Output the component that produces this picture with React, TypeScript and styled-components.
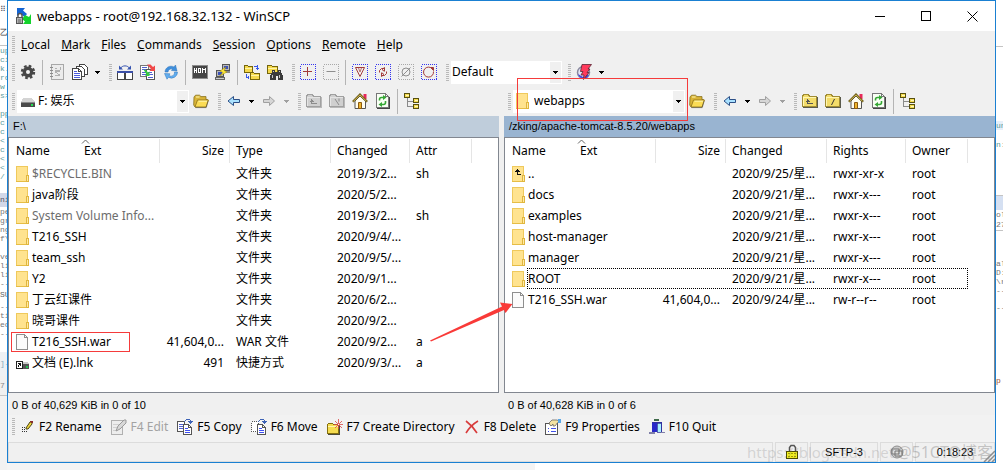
import React from "react";
import styled, { createGlobalStyle, css } from "styled-components";

const uiFont = '"Noto Sans", "Noto Sans CJK SC", sans-serif';
const narrowFont = '"Liberation Sans", "Noto Sans CJK SC", sans-serif';

const GlobalStyle = createGlobalStyle`
  * { box-sizing: border-box; }
  body { margin: 0; background: #ffffff; font: 12px/16px ${uiFont}; color: #000000; }
  button, select { font: inherit; color: inherit; }
`;

/* ---------- page and window ---------- */

const Desktop = styled.div`
  display: grid;
  grid-template-columns: 7px minmax(0, 1fr) 7px;
  min-height: 100vh;
  overflow: hidden;
  background: linear-gradient(90deg, #f4f4f4 0 535px, #ffffff 535px);
`;

const Sliver = styled.div`
  overflow: hidden;
  background: #ffffff;
`;

const CodeLine = styled.div<{ $h?: number; $color?: string; $bg?: string; $rule?: boolean }>`
  height: ${(p) => p.$h ?? 9}px;
  line-height: ${(p) => p.$h ?? 9}px;
  font-family: "Liberation Mono", monospace;
  font-size: 8px;
  white-space: nowrap;
  color: ${(p) => p.$color ?? "#5d9c9c"};
  background: ${(p) => p.$bg ?? "transparent"};
  border-bottom: ${(p) => (p.$rule ? "1px solid #c4c4c4" : "0")};
`;

const Window = styled.main`
  align-self: start;
  display: flex;
  flex-direction: column;
  border: 1px solid #1a80d2;
  background: #f0f0f0;
  position: relative;
`;

const TitleBar = styled.header`
  display: flex;
  align-items: center;
  height: 30px;
  padding-left: 8px;
  background: #ffffff;
`;

const Title = styled.h1`
  flex: 1;
  margin: 0 0 0 5px;
  font-size: 13px;
  font-weight: 400;
`;

const CaptionButton = styled.button`
  display: grid;
  place-items: center;
  width: 46px;
  height: 29px;
  padding: 0;
  border: 0;
  background: transparent;
`;

const Row = styled.div<{ $h: number }>`
  display: flex;
  align-items: center;
  height: ${(p) => p.$h}px;
`;

const Gripper = styled.span<{ $first?: boolean }>`
  flex: none;
  width: 3px;
  height: 17px;
  margin: 0 1px 0 ${(p) => (p.$first ? 4 : 6)}px;
  background: repeating-linear-gradient(#b9b9b9 0 1px, transparent 1px 2px);
`;

const MenuItem = styled.button`
  padding: 0 6px 0 5px;
  border: 0;
  background: transparent;
`;

const ToolButton = styled.button`
  flex: none;
  display: grid;
  place-items: center;
  width: 23px;
  height: 23px;
  padding: 0;
  border: 0;
  background: transparent;
`;

const DropButton = styled(ToolButton)`
  width: 12px;
`;

const Divider = styled.span`
  flex: none;
  width: 1px;
  height: 25px;
  margin: 0 2px 0 3px;
  background: #b4b4b4;
`;

const Combo = styled.label<{ $w: number }>`
  position: relative;
  flex: none;
  display: flex;
  align-items: center;
  width: ${(p) => p.$w}px;
  height: 23px;
  margin-left: 1px;
  padding-left: 1px;
  background: #ffffff;
`;

const ComboIcon = styled.span`
  display: flex;
  width: 18px;
  margin-left: 2px;
`;

const Select = styled.select`
  flex: 1;
  min-width: 0;
  height: 22px;
  padding: 0;
  border: 0;
  outline: 0;
  background: transparent;
  appearance: none;
`;

const ComboArrow = styled.span`
  display: grid;
  place-items: center;
  width: 11px;
  height: 21px;
  margin-right: 1px;
  background: #f0f0f0;
  pointer-events: none;
`;

/* ---------- file panels ---------- */

const Panels = styled.div`
  display: flex;
  gap: 5px;
`;

const Panel = styled.section`
  flex: 1;
  min-width: 0;
`;

const PathBar = styled.div<{ $active?: boolean }>`
  height: 21px;
  padding: 0 5px;
  font: 11px/21px ${narrowFont};
  background: ${(p) => (p.$active ? "#99b4d1" : "#bfcddb")};
`;

const ListBox = styled.div`
  min-height: 256px;
  border: 1px solid #828790;
  background: #ffffff;
`;

const FileTable = styled.table`
  width: 100%;
  table-layout: fixed;
  border-collapse: collapse;
`;

const HeadCell = styled.th<{ $w?: number; $right?: boolean }>`
  width: ${(p) => (p.$w ? `${p.$w}px` : "auto")};
  height: 25px;
  padding: 0 6px;
  &:first-child { padding-left: 7px; }
  font-weight: 400;
  text-align: ${(p) => (p.$right ? "right" : "left")};
  background: ${(p) => (p.$w ? "linear-gradient(#e5e5e5, #e5e5e5) right 0 top 1px / 1px 24px no-repeat" : "none")};
`;

const HeadName = styled.span`
  display: grid;
  grid-template-columns: 68px 1fr;
`;

const ExtLabel = styled.span`
  position: relative;
`;

const SortMark = styled.svg`
  position: absolute;
  left: -3px;
  top: -4px;
`;

const Cell = styled.td<{ $right?: boolean; $dim?: boolean }>`
  position: relative;
  height: 21px;
  padding: 0 2px 0 6px;
  &:first-child { padding-left: 7px; }
  white-space: nowrap;
  ${(p) => p.$right && css`padding-right: 6px; text-align: right;`}
  color: ${(p) => (p.$dim ? "#6d6d6d" : "#000000")};
`;

const NameBox = styled.span`
  display: flex;
  align-items: center;
  gap: 3px;
`;

const FocusFrame = styled.span`
  position: absolute;
  left: 22px;
  top: 0;
  width: 441px;
  height: 21px;
  border: 1px dotted #000000;
  pointer-events: none;
`;

const FileMark = styled.span`
  position: absolute;
  z-index: 2;
  left: 2px;
  top: 1px;
  width: 119px;
  height: 20px;
  border: 1px solid #f53b3b;
  pointer-events: none;
`;

const ComboMark = styled.span`
  position: absolute;
  z-index: 2;
  left: 4px;
  top: -12px;
  width: 171px;
  height: 43px;
  border: 1px solid #f53b3b;
  pointer-events: none;
`;

const ArrowMark = styled.svg`
  position: absolute;
  z-index: 3;
  left: 20px;
  top: -32px;
  pointer-events: none;
`;

const CountLine = styled.div`
  height: 22px;
  padding: 0 4px;
  font: 11px/24px ${narrowFont};
`;

/* ---------- bottom bars ---------- */

const KeyBar = styled.nav`
  display: flex;
  align-items: center;
  height: 27px;
  padding-bottom: 4px;
  background: #f2f2f2;
`;

const KeyButton = styled.button`
  display: flex;
  align-items: center;
  gap: 4px;
  padding: 0 6px 0 3px;
  border: 0;
  background: transparent;
  white-space: nowrap;
  &:disabled { color: #a3a3a3; }
`;

const StatusBar = styled.footer`
  position: relative;
  display: flex;
  gap: 2px;
  height: 20px;
  font: 11px/18px ${narrowFont};
`;

const StatusCell = styled.div<{ $w?: number }>`
  flex: ${(p) => (p.$w ? "none" : "1")};
  width: ${(p) => (p.$w ? `${p.$w}px` : "auto")};
  display: grid;
  place-items: center;
  border: 1px solid #dcdcdc;
`;

const Watermark = styled.div`
  position: absolute;
  right: 2px;
  bottom: 1px;
  display: flex;
  gap: 3px;
  font: 16px/18px ${uiFont};
  color: rgba(120, 120, 120, 0.38);
  white-space: nowrap;
  pointer-events: none;
`;

const WatermarkLink = styled.span`
  font-size: 15px;
  color: rgba(120, 120, 120, 0.25);
`;

const SizeGrip = styled.svg`
  position: absolute;
  right: 0;
  bottom: 0;
`;

/* ---------- icons ---------- */

type IconProps = { children: React.ReactNode; w?: number; h?: number; smooth?: boolean };
const Icon = ({ children, w = 16, h = 16, smooth }: IconProps) => (
  <svg width={w} height={h} viewBox={`0 0 ${w} ${h}`} fill="none" shapeRendering={smooth ? "auto" : "crispEdges"} aria-hidden="true">
    {children}
  </svg>
);

const Caret = ({ off }: { off?: boolean }) => (
  <Icon w={5} h={3}><path d="M0 0h5v1h-1v1h-1v1h-1v-1h-1v-1h-1z" fill={off ? "#a0a0a0" : "#000"} /></Icon>
);

const AppIcon = () => (
  <Icon smooth>
    <path d="M1 0h8L7 2.500l4 3.500-2.500 3L4 5.500 1 8z" fill="#1464d2" />
    <path d="M15 6v10H7l2-2.500L6 11l3-4 4 2z" fill="#14d22c" />
    <path d="M2 10V7.500a2 2 0 0 1 4 0V10" stroke="#555" strokeWidth="1.500" />
    <rect x="0.500" y="9.500" width="6" height="6" fill="#b5b5b5" stroke="#555" />
    <path d="M2 12h3M2 14h3" stroke="#666" />
  </Icon>
);

const Gear = () => (
  <Icon smooth>
    <circle cx="8" cy="8" r="5.400" fill="#474747" />
    <circle cx="8" cy="8" r="6" stroke="#474747" strokeWidth="2.400" strokeDasharray="2.600 2.110" />
    <circle cx="8" cy="8" r="2" fill="#f4f4f4" />
  </Icon>
);

const SyncBook = () => (
  <Icon>
    <rect x="2.500" y="0.500" width="12" height="15" fill="#ececec" stroke="#a8a8a8" />
    <path d="M1 3h3M1 6h3M1 9h3M1 12h3" stroke="#8c8c8c" />
    <path d="M6 4h2v2h3v2h-3v2h3v2h-5v-1h3v-2h-3v-3h2v-1h-2zM11 3h1v3h-1z" fill="#b0b0b0" />
  </Icon>
);

const Stack = () => (
  <Icon>
    <path d="M7.500 0.500h5l3 3v7h-8z" fill="#fff" stroke="#444" />
    <path d="M4.500 2.500h5l3 3v7h-8z" fill="#fff" stroke="#444" />
    <path d="M0.500 4.500h6l3 3v8h-9z" fill="#fff" stroke="#444" />
    <path d="M6.500 4.500v3h3" stroke="#444" />
    <path d="M2 7.500h3M2 9.500h6M2 11.500h6M2 13.500h6" stroke="#4b5bdc" />
  </Icon>
);

const SplitView = () => (
  <Icon>
    <rect x="0.500" y="7.500" width="7" height="8" fill="#fff" stroke="#444" />
    <rect x="8.500" y="7.500" width="7" height="8" fill="#fff" stroke="#444" />
    <path d="M0 7h16v2H0z" fill="#3c50a8" />
    <g shapeRendering="auto">
      <path d="M3.500 4.500C5 1 11 1 12.500 4.500" stroke="#3553b0" />
      <path d="M2 1.500v4h4zM14 1.500v4h-4z" fill="#3553b0" />
    </g>
  </Icon>
);

const Compare = () => (
  <Icon>
    <rect x="0.500" y="1.500" width="8" height="11" fill="#fff" stroke="#777" />
    <path d="M2 3.500h5M2 5.500h5M2 8.500h4M2 10.500h4" stroke="#5060d0" />
    <path d="M6.500 5.500h6l2 2v8h-8z" fill="#fff" stroke="#555" />
    <path d="M8 8.500h4M8 10.500h5M8 13.500h5" stroke="#5060d0" />
    <g shapeRendering="auto">
      <path d="M7 0.500h3.500l2.500 2.500 2-1.500V7H9.500l1.500-2z" fill="#f04848" />
      <path d="M3.500 5.500l2.500.5 2 2.500 1.500-1V12H5l1.500-1.500z" fill="#35c840" />
    </g>
  </Icon>
);

const Refresh = () => (
  <Icon smooth>
    <path d="M2 8a6 6 0 0 1 9-5l1.500-2L14 7l-5.500-.5 1-1.500A3.500 3.500 0 0 0 5 8z" fill="#3f8fdc" stroke="#2d73b8" strokeWidth=".5" />
    <path d="M14.500 8a6 6 0 0 1-9 5.300L4 15.200 1.500 9.500l5.500.3-1 1.700A3.500 3.500 0 0 0 11.500 8z" fill="#62aef0" stroke="#2d73b8" strokeWidth=".5" />
  </Icon>
);

const Console = () => (
  <Icon>
    <rect x="0.500" y="1.500" width="15" height="13" fill="#464646" stroke="#8e8e8e" />
    <path d="M2.500 4v5M4.500 4v5M3 6.500h1M6.500 4v5M8.500 4v5M7 4.500h1M7 8.500h1M10.500 4v5M13.500 4v5M11 5.500h1M12 5.500h1" stroke="#fff" />
  </Icon>
);

const Terminals = () => (
  <Icon>
    <path d="M7.500 0.500h7v6h-7z" fill="#b8b8b8" stroke="#555" />
    <path d="M9 2h4v3H9z" fill="#3a50b8" />
    <path d="M7 7h8v2H7z" fill="#8c8c8c" />
    <path d="M1.500 6.500h7v6h-7z" fill="#b8b8b8" stroke="#555" />
    <path d="M3 8h4v3H3z" fill="#3a50b8" />
    <path d="M0.500 13.500h9v2h-9z" fill="#ccc" stroke="#666" />
    <path d="M11 3L5 7l3 1.500L4.500 12 12 8 9 6.500z" fill="#ffe93b" stroke="#a08b00" strokeWidth=".5" shapeRendering="auto" />
  </Icon>
);

const SyncFolders = () => (
  <Icon>
    <path d="M0.500 1.500h3l1 1h4v6h-8z" fill="#f5d94c" stroke="#75650b" />
    <path d="M6.500 8.500h3l1 1h5v6h-9z" fill="#f5d94c" stroke="#75650b" />
    <path d="M1 4.500h7M7 11.500h8" stroke="#fff4a8" />
    <path d="M10 2.500h3M13.500 1v5M12 4.500h3M2.500 10v3M2 13.500h3M4.500 12v3" stroke="#3858e8" />
  </Icon>
);

const FindFolder = () => (
  <Icon>
    <path d="M0.500 1.500h4l1 1h5v7h-10z" fill="#f5d94c" stroke="#75650b" />
    <path d="M1 4.500h9" stroke="#fff4a8" />
    <path d="M5 6h3v2h3V6h3v3h1v2h1v5h-5v-4h-2v4H3v-5h1V9h1z" fill="#3b3b3b" />
    <path d="M5 11h1v3H5zM12 11h1v3h-1zM6 7h1v1H6zM12 7h1v1h-1z" fill="#c8c8c8" />
  </Icon>
);

const Marked = ({ children, off }: { children: React.ReactNode; off?: boolean }) => (
  <Icon>
    <rect x="0.500" y="0.500" width="15" height="15" stroke={off ? "#a8a8a8" : "#3535f0"} strokeDasharray="1 1" />
    <g stroke={off ? "#8e8e8e" : "#a33a3a"} shapeRendering="auto">{children}</g>
  </Icon>
);

const DriveIcon = () => (
  <Icon>
    <path d="M3 5h9l3 4H1z" fill="#d4d4d4" />
    <path d="M1 9h14v5H1z" fill="#4a4a4a" />
    <path d="M1 9h14v1H1z" fill="#8a8a8a" />
    <path d="M11 11h2v2h-2z" fill="#22e052" />
  </Icon>
);

const FolderSmall = ({ up }: { up?: boolean }) => (
  <Icon w={13}>
    <path d="M0 0h12v16H0z" fill="#ffe38f" />
    <path d="M0.500 15.500V0.500h11v9" stroke="#efc95c" />
    <path d="M0 15.500h11" stroke="#e6bd45" />
    <path d="M10.500 9.500h2v6h-2z" fill="#ffeaa6" stroke="#e0b63e" />
    {up && <path d="M5.500 3v6M3 5.500h5M4 4.500h3M5 8.500h4" stroke="#111" />}
  </Icon>
);

const FileIcon = () => (
  <Icon w={13}>
    <path d="M0.500 0.500h8l3 3v12h-11z" fill="#fbfbfb" stroke="#8f8f8f" />
    <path d="M8.500 0.500v3h3" stroke="#8f8f8f" />
  </Icon>
);

const LinkIcon = () => (
  <Icon w={13}>
    <path d="M4 9h9v5H4z" fill="#555" />
    <path d="M5 7h7l1 2H4z" fill="#c9c9c9" />
    <path d="M10 11h2v2h-2z" fill="#22c052" />
    <path d="M0.500 6.500h6v7h-6z" fill="#fff" stroke="#222" />
    <path d="M2 8h3v3H4v-1H3v2H2v-2h1V9H2z" fill="#111" />
  </Icon>
);

const OpenFolder = () => (
  <Icon smooth>
    <path d="M1 4l1.500-1.800h4L8 3.600h5V6.500h1.500L13 14H2L.700 12z" fill="#d9b437" stroke="#85701c" strokeWidth=".8" />
    <path d="M2 14 4.500 7h11L13 14z" fill="#fbdc55" stroke="#8c7018" strokeWidth=".8" />
    <path d="M3 4h3.500M5.500 8.200h8.500" stroke="#fff6b0" />
    <path d="M2.500 14.600h10.800L15 8" stroke="#5a5546" strokeWidth=".6" />
  </Icon>
);

const NavArrow = ({ forward }: { forward?: boolean }) => (
  <Icon smooth>
    {forward
      ? <path d="M2.500 6.500h6v-3L13.500 8l-5 4.500v-3h-6z" fill="#d6d6d6" stroke="#a0a0a0" />
      : <path d="M13.500 6.500h-6v-3L2 8l5.500 4.500v-3h6z" fill="#a9e1ff" stroke="#2c4f86" />}
  </Icon>
);

const BigFolder = ({ off, root }: { off?: boolean; root?: boolean }) => (
  <Icon>
    <path d="M0.500 3.500l1-2h5l1 2h7v10h-14z" fill={off ? "#cfcfcf" : "#f3dc6a"} stroke={off ? "#a0a0a0" : "#a08c34"} />
    <path d="M1 4.500h13M1.500 5v8" stroke={off ? "#e4e4e4" : "#fff6b0"} />
    <path d="M1 14.500h14.500V4" stroke={off ? "#b8b8b8" : "#5a5a4c"} />
    {root
      ? <path d={off ? "M6 6l4 6M10 5.500v3" : "M9.500 6l-3 6"} stroke={off ? "#8c8c8c" : "#333"} shapeRendering="auto" />
      : <path d="M5.500 11V6M4 8.500h4M5 7.500h2M5 10.500h6" stroke={off ? "#8c8c8c" : "#555"} />}
  </Icon>
);

const Home = () => (
  <Icon smooth>
    <path d="M11.500 1h3v5h-3z" fill="#e8285a" />
    <path d="M3 8 8 3l5.500 5v7.500H3z" fill="#fffdf0" stroke="#555" />
    <path d="M.8 8.700 8 1.500l7.200 7.200" stroke="#6a5a18" strokeWidth="2" />
    <path d="M1.500 8.200 8 1.900l6.500 6.300" stroke="#f2d760" strokeWidth=".8" />
    <path d="M6.500 9.500h3v6h-3z" fill="#f0b52c" stroke="#8c5a10" />
  </Icon>
);

const PageRefresh = () => (
  <Icon>
    <path d="M1.500 0.500h9l3 3v11h-12z" fill="#f8fff4" stroke="#777" />
    <path d="M2 15.500h12.500V4" stroke="#444" />
    <path d="M10.500 0.500v3h3" stroke="#777" />
    <g shapeRendering="auto">
      <path d="M4.500 7.500V6.500a2 2 0 0 1 2-2H9M10.500 8v1.500a2 2 0 0 1-2 2H6" stroke="#35a835" strokeWidth="1.600" />
      <path d="M8 2l3.500 2.500L8 7zM7 9l-3.500 2.500L7 14z" fill="#35a835" />
    </g>
  </Icon>
);

const Tree = () => (
  <Icon>
    <path d="M3.500 5v9M4 8.500h5M4 13.500h5" stroke="#8a8a8a" />
    <path d="M0.500 0.500h5v4h-5zM9.500 5.500h5v4h-5zM9.500 11.500h5v4h-5z" fill="#f5dc50" stroke="#57500f" />
    <path d="M2 2h3v1H2zM11 7h3v1h-3zM11 13h3v1h-3z" fill="#fff8c0" />
  </Icon>
);

const Lightning = () => (
  <Icon smooth>
    <circle cx="7.500" cy="8.500" r="6" fill="#e4e4f4" stroke="#8a8aa0" strokeWidth="1.500" />
    <path d="M2 10a6 6 0 0 0 11 1.500L10 10l-3 3z" fill="#4747e0" />
    <path d="M6 .5h9.500L12 5h2l-3 3.500h2L7.500 15.500 8 11H5l2-3.500H4.500z" fill="#ff3b5c" stroke="#5a2434" strokeWidth=".8" />
  </Icon>
);

const Pencil = () => (
  <Icon>
    <path d="M3 8h1v1H3zM5 8h1v1H5zM3 10h1v1H3zM3 12h1v1H3zM5 12h1v1H5zM5 10h1v1H5zM7 12h1v1H7z" fill="#333" />
    <path d="M7 9l4-6h2v2l-4 5H7z" fill="#f0d63c" stroke="#4a4416" shapeRendering="auto" />
    <path d="M11 2h3v2h-2z" fill="#8b2c2c" />
  </Icon>
);

const EditPage = () => (
  <Icon>
    <path d="M0.500 1.500h11v14h-11z" fill="#ededed" stroke="#b0b0b0" />
    <path d="M2 5h7M2 8h6M2 11h5" stroke="#d0d0d0" />
    <path d="M5 12l2-5 6-6h2v3l-6 6z" fill="#d8d8d8" stroke="#9a9a9a" shapeRendering="auto" />
  </Icon>
);

const CopyPages = ({ move }: { move?: boolean }) => (
  <Icon>
    <rect x="0.500" y="2.500" width="7" height="10" fill="#fff" stroke="#555" strokeDasharray={move ? "1 1" : "none"} />
    {!move && <path d="M2 5.500h4M2 7.500h4M2 9.500h4" stroke="#5060d0" />}
    <path d="M6.500 5.500h5l3 3v7h-8z" fill="#fff" stroke="#555" />
    <path d="M11.500 5.500v3h3" stroke="#555" />
    <path d="M8 9.500h3M8 11.500h5M8 13.500h5" stroke="#3f4ff0" />
    <path d="M7 2.500h1M8 1.500h1M9 0.500h4M13.500 1v1" stroke="#3d62b5" />
    <path d="M11 2h5l-2 3h-1z" fill="#3d62b5" />
  </Icon>
);

const NewFolder = () => (
  <Icon>
    <path d="M0.500 5.500l1-1h4l1 1h5v9h-11z" fill="#f5dc50" stroke="#85700f" />
    <path d="M1 7.500h10" stroke="#fff6b0" />
    <path d="M1 15.500h11.500V6" stroke="#4a4a3c" />
    <path d="M11.500 0v10M7 5.500h9M8 2l7 7M15 2l-7 7" stroke="#d84848" strokeWidth=".8" shapeRendering="auto" />
    <path d="M11 5h1v1h-1z" fill="#fff" />
  </Icon>
);

const DeleteCross = () => (
  <Icon smooth><path d="M2 2c4 3 8 7 11 12M14 2C9 5 5 9 2 14" stroke="#d83c3c" strokeWidth="1.600" /></Icon>
);

const Properties = () => (
  <Icon>
    <path d="M0.500 4.500h12v11h-12z" fill="#fff" stroke="#555" />
    <path d="M3 9.500h1M6 9.500h5M3 12.500h1M6 12.500h5" stroke="#4050e8" />
    <path d="M4 4l3-3h5l2 1-4 5H8V5L6 7 5 6z" fill="#f3e3a2" stroke="#555" strokeWidth=".7" shapeRendering="auto" />
    <path d="M13 0h3v4h-3z" fill="#58a8e8" />
  </Icon>
);

const Door = () => (
  <Icon>
    <path d="M5 0h5v2H5z" fill="#3f6a4a" />
    <path d="M3 4h5v9H3z" fill="#2828c8" />
    <path d="M8 4h4v9H8z" fill="#a8f0ff" stroke="#2b2b8c" strokeWidth=".7" />
    <path d="M2.500 3.500h10v10" stroke="#3030a0" />
    <path d="M0 13h6v2H0zM12 13h4v1h-4z" fill="#8080a8" />
  </Icon>
);

const Lock = () => (
  <Icon>
    <path d="M5.500 8V3.500l1.500-2h3l1.500 2V8" stroke="#555" strokeWidth="1.500" shapeRendering="auto" />
    <path d="M2.500 7.500h11v7h-11z" fill="#f1ee20" stroke="#4c4a00" />
    <path d="M4 9.500h8M4 12.500h8" stroke="#a19e00" strokeDasharray="2 1" />
  </Icon>
);

const Server = () => (
  <Icon smooth>
    <circle cx="8" cy="8" r="6" fill="#c9c9c9" stroke="#8e8e8e" />
    <path d="M3 5h7v5H3zM6 7h7v5H6z" stroke="#777" fill="#dedede" />
  </Icon>
);

/* ---------- parts ---------- */

const Tool = ({ label, children, disabled }: { label: string; children: React.ReactNode; disabled?: boolean }) => (
  <ToolButton type="button" aria-label={label} disabled={disabled}>{children}</ToolButton>
);

const Drop = ({ label, off }: { label: string; off?: boolean }) => (
  <DropButton type="button" aria-label={label} disabled={off}><Caret off={off} /></DropButton>
);

const AddressBar = ({ place, icon, local, mark }: { place: string; icon: React.ReactNode; local?: boolean; mark?: boolean }) => (
  <Row $h={30}>
    <Gripper $first />
    <Combo $w={172}>
      <ComboIcon>{icon}</ComboIcon>
      <Select aria-label={local ? "Local drive" : "Remote directory"}><option>{place}</option></Select>
      <ComboArrow><Caret /></ComboArrow>
      {mark && <ComboMark />}
    </Combo>
    <Tool label="Open directory"><OpenFolder /></Tool>
    <Gripper />
    <Tool label="Back"><NavArrow /></Tool>
    <Drop label="Back history" />
    <Tool label="Forward" disabled><NavArrow forward /></Tool>
    <Drop label="Forward history" off />
    <Gripper />
    <Tool label="Parent directory" disabled={local}><BigFolder off={local} /></Tool>
    <Tool label="Root directory" disabled={local}><BigFolder off={local} root /></Tool>
    <Tool label="Home directory"><Home /></Tool>
    <Tool label="Refresh"><PageRefresh /></Tool>
    <Divider />
    <Tool label="Directory tree"><Tree /></Tool>
  </Row>
);

type Entry = {
  name: string;
  kind?: "folder" | "up" | "file" | "link";
  cells: string[];
  dim?: boolean;
  focused?: boolean;
  mark?: boolean;
};

const kindIcon = {
  folder: <FolderSmall />,
  up: <FolderSmall up />,
  file: <FileIcon />,
  link: <LinkIcon />,
};

const columnWidths = [70, 101, 79, 62];

const Files = ({ heads, entries }: { heads: string[]; entries: Entry[] }) => (
  <ListBox>
    <FileTable>
      <thead>
        <tr>
          <HeadCell $w={151}>
            <HeadName>
              <span>Name</span>
              <ExtLabel>
                <SortMark width="9" height="5" viewBox="0 0 9 5" fill="none"><path d="M1 4.500l3.500-3.500L8 4.500" stroke="#666" /></SortMark>
                Ext
              </ExtLabel>
            </HeadName>
          </HeadCell>
          {heads.map((h, i) => (
            <HeadCell key={h} $w={columnWidths[i]} $right={h === "Size"}>{h}</HeadCell>
          ))}
          <HeadCell as="td" />
        </tr>
      </thead>
      <tbody>
        {entries.map((e) => (
          <tr key={e.name}>
            <Cell $dim={e.dim}>
              <NameBox>{kindIcon[e.kind ?? "folder"]}{e.name}</NameBox>
              {e.focused && <FocusFrame />}
              {e.mark && <FileMark />}
            </Cell>
            {e.cells.map((c, i) => (
              <Cell key={i} $right={i === 0}>
                {c}
                {e.mark && i === 3 && (
                  <ArrowMark width="84" height="44" viewBox="0 0 84 44">
                    <path d="M0 41.500L72 7.500l-2-4L82.500 5l-7 9-1.500-3L1 42.500z" fill="#f93a38" />
                  </ArrowMark>
                )}
              </Cell>
            ))}
            <Cell />
          </tr>
        ))}
      </tbody>
    </FileTable>
  </ListBox>
);

const localFiles: Entry[] = [
  { name: "$RECYCLE.BIN", cells: ["", "文件夹", "2019/3/2...", "sh"], dim: true },
  { name: "java阶段", cells: ["", "文件夹", "2020/5/2...", ""] },
  { name: "System Volume Info...", cells: ["", "文件夹", "2019/3/2...", "sh"], dim: true },
  { name: "T216_SSH", cells: ["", "文件夹", "2020/9/4/...", ""] },
  { name: "team_ssh", cells: ["", "文件夹", "2020/9/5/...", ""] },
  { name: "Y2", cells: ["", "文件夹", "2020/9/1...", ""] },
  { name: "丁云红课件", cells: ["", "文件夹", "2020/6/2...", ""] },
  { name: "晓哥课件", cells: ["", "文件夹", "2020/9/2...", ""] },
  { name: "T216_SSH.war", kind: "file", cells: ["41,604,0...", "WAR 文件", "2020/9/2...", "a"], mark: true },
  { name: "文档 (E).lnk", kind: "link", cells: ["491", "快捷方式", "2020/9/3/...", "a"] },
];

const remoteFiles: Entry[] = [
  { name: "..", kind: "up", cells: ["", "2020/9/25/星...", "rwxr-xr-x", "root"] },
  ...["docs", "examples", "host-manager", "manager", "ROOT"].map((name) => ({
    name,
    cells: ["", "2020/9/21/星...", "rwxr-x---", "root"],
    focused: name === "ROOT",
  })),
  { name: "T216_SSH.war", kind: "file", cells: ["41,604,0...", "2020/9/24/星...", "rw-r--r--", "root"] },
];

const menus = ["Local", "Mark", "Files", "Commands", "Session", "Options", "Remote", "Help"];

const keys: { label: string; icon: React.ReactNode; off?: boolean }[] = [
  { label: "F2 Rename", icon: <Pencil /> },
  { label: "F4 Edit", icon: <EditPage />, off: true },
  { label: "F5 Copy", icon: <CopyPages /> },
  { label: "F6 Move", icon: <CopyPages move /> },
  { label: "F7 Create Directory", icon: <NewFolder /> },
  { label: "F8 Delete", icon: <DeleteCross /> },
  { label: "F9 Properties", icon: <Properties /> },
  { label: "F10 Quit", icon: <Door /> },
];

const teal = (lines: string[]) => lines.map((t, i) => <CodeLine key={i}>{t}</CodeLine>);

const LeftSliver = () => (
  <Sliver aria-hidden="true">
    <CodeLine $h={20} $color="#555566">⠿⠿</CodeLine>
    <CodeLine $h={26} $color="#444" $rule>乙</CodeLine>
    {teal(["up", "ci", "k.", "ro", "w", "s>", "", "pp", "c", "c", "<", "c", "<", "<", "/"])}
    <CodeLine $h={12} />
    <CodeLine $h={14} $color="#556" $bg="#d3d8e8">ni</CodeLine>
    {["pe", "gr", "ng", "f\\", "", "ve", "li", "li"].map((t, i) => <CodeLine key={i} $color="#777">{t}</CodeLine>)}
    <CodeLine $h={9} $color="#777">--</CodeLine>
    <CodeLine $h={14} $color="#666">SU</CodeLine>
    <CodeLine $color="#777">--</CodeLine>
    <CodeLine $color="#777">ti</CodeLine>
    <CodeLine $color="#777">ed</CodeLine>
    <CodeLine $color="#777">--</CodeLine>
    <CodeLine $h={14} />
    <CodeLine $h={24} $color="#8ab" $bg="#eef1f4">]-</CodeLine>
    <CodeLine $h={20} $color="#888" $bg="#f0f0f0" $rule>7</CodeLine>
    <CodeLine $h={96} $color="#aaa" $bg="#f2f2f2" />
  </Sliver>
);

const RightSliver = () => (
  <Sliver aria-hidden="true">
    <CodeLine $h={47} $rule />
    <CodeLine $h={74} />
    <CodeLine $bg="#e6f0fa">un</CodeLine>
    <CodeLine $h={10} />
    <CodeLine>n:</CodeLine>
    <CodeLine $h={47} $rule />
    <CodeLine $h={14} $bg="#d5e0f2" />
    <CodeLine $color="#777">ol</CodeLine>
    <CodeLine $color="#777" $h={12} $rule>27</CodeLine>
    <CodeLine $h={28} />
    <CodeLine $color="#777">al</CodeLine>
    <CodeLine $color="#777">D:</CodeLine>
    <CodeLine $color="#777">\r</CodeLine>
    <CodeLine $color="#777">--</CodeLine>
    <CodeLine $h={8} />
    <CodeLine $color="#777">--</CodeLine>
    <CodeLine $h={64} />
    <CodeLine $color="#a0522d">p</CodeLine>
  </Sliver>
);

export default function App() {
  return (
    <Desktop>
      <GlobalStyle />
      <LeftSliver />
      <Window>
        <TitleBar>
          <AppIcon />
          <Title>webapps - root@192.168.32.132 - WinSCP</Title>
          <CaptionButton type="button" aria-label="Minimize"><Icon w={11} h={11}><path d="M0 5.500h10" stroke="#000" /></Icon></CaptionButton>
          <CaptionButton type="button" aria-label="Maximize"><Icon w={11} h={11}><rect x="0.500" y="0.500" width="9" height="9" stroke="#000" /></Icon></CaptionButton>
          <CaptionButton type="button" aria-label="Close"><Icon w={11} h={11} smooth><path d="M0.500 0.500l10 10M10.500 0.500l-10 10" stroke="#000" /></Icon></CaptionButton>
        </TitleBar>

        <Row $h={27} as="nav">
          <Gripper $first />
          {menus.map((m) => (
            <MenuItem key={m} type="button"><u>{m[0]}</u>{m.slice(1)}</MenuItem>
          ))}
        </Row>

        <Row $h={28} role="toolbar">
          <Gripper $first />
          <Tool label="Preferences"><Gear /></Tool>
          <Divider />
          <Tool label="Synchronize browsing" disabled><SyncBook /></Tool>
          <Tool label="Queue"><Stack /></Tool>
          <Drop label="Queue options" />
          <Gripper />
          <Tool label="Compare directories"><SplitView /></Tool>
          <Tool label="Synchronize"><Compare /></Tool>
          <Tool label="Keep up to date"><Refresh /></Tool>
          <Divider />
          <Tool label="Console"><Console /></Tool>
          <Tool label="Open in PuTTY"><Terminals /></Tool>
          <Divider />
          <Tool label="Synchronize folders"><SyncFolders /></Tool>
          <Tool label="Find files"><FindFolder /></Tool>
          <Gripper />
          <Tool label="Select files"><Marked><path d="M7.500 3v9M3 7.500h9" /></Marked></Tool>
          <Tool label="Unselect files" disabled><Marked off><path d="M3.500 7.500h9" /></Marked></Tool>
          <Divider />
          <Tool label="Select all"><Marked><path d="M3.500 3.500h9L8 12.500z" /><path d="M6.500 4L8 8l1.500-4" strokeWidth=".7" /></Marked></Tool>
          <Tool label="Invert selection"><Marked><path d="M9.500 7V3.500L7 5.500 9.500 7.500M9 4.500H6.500L4.500 6.500v2M6.500 9v3.500L9 10.500 6.500 8.500M7 11.500h2.500l2-2v-2" /></Marked></Tool>
          <Tool label="Clear selection" disabled><Marked off><circle cx="8" cy="8" r="4" /><path d="M3.500 12.500l9-9" /></Marked></Tool>
          <Tool label="Restore selection"><Marked><path d="M12.500 7.500a5 5 0 1 1-3-4" /><path d="M9.500 3.500h3v3z" fill="#a33a3a" /></Marked></Tool>
          <Gripper />
          <Combo $w={111}>
            <Select aria-label="Transfer settings preset"><option>Default</option></Select>
            <ComboArrow><Caret /></ComboArrow>
          </Combo>
          <Gripper />
          <Tool label="Reconnect session"><Lightning /></Tool>
          <Drop label="Session options" />
        </Row>

        <Panels>
          <Panel aria-label="Local files">
            <AddressBar place="F: 娱乐" icon={<DriveIcon />} local />
            <PathBar>F:\</PathBar>
            <Files heads={["Size", "Type", "Changed", "Attr"]} entries={localFiles} />
            <CountLine>0 B of 40,629 KiB in 0 of 10</CountLine>
          </Panel>
          <Panel aria-label="Remote files">
            <AddressBar place="webapps" icon={<FolderSmall />} mark />
            <PathBar $active>/zking/apache-tomcat-8.5.20/webapps</PathBar>
            <Files heads={["Size", "Changed", "Rights", "Owner"]} entries={remoteFiles} />
            <CountLine>0 B of 40,628 KiB in 0 of 6</CountLine>
          </Panel>
        </Panels>

        <KeyBar>
          <Gripper $first />
          {keys.map((k) => (
            <KeyButton key={k.label} type="button" disabled={k.off}>{k.icon}{k.label}</KeyButton>
          ))}
        </KeyBar>

        <StatusBar>
          <StatusCell />
          <StatusCell $w={33}><Lock /></StatusCell>
          <StatusCell $w={68}>SFTP-3</StatusCell>
          <StatusCell $w={33}><Server /></StatusCell>
          <StatusCell $w={80}>0:18:23</StatusCell>
          <Watermark><WatermarkLink>https://blog.csdn.net</WatermarkLink><span>@51CTO博客</span></Watermark>
          <SizeGrip width="12" height="12" viewBox="0 0 12 12"><path d="M1 12L12 1M5 12l7-7M9 12l3-3" stroke="#8e8e8e" strokeWidth="1.500" /></SizeGrip>
        </StatusBar>
      </Window>
      <RightSliver />
    </Desktop>
  );
}
